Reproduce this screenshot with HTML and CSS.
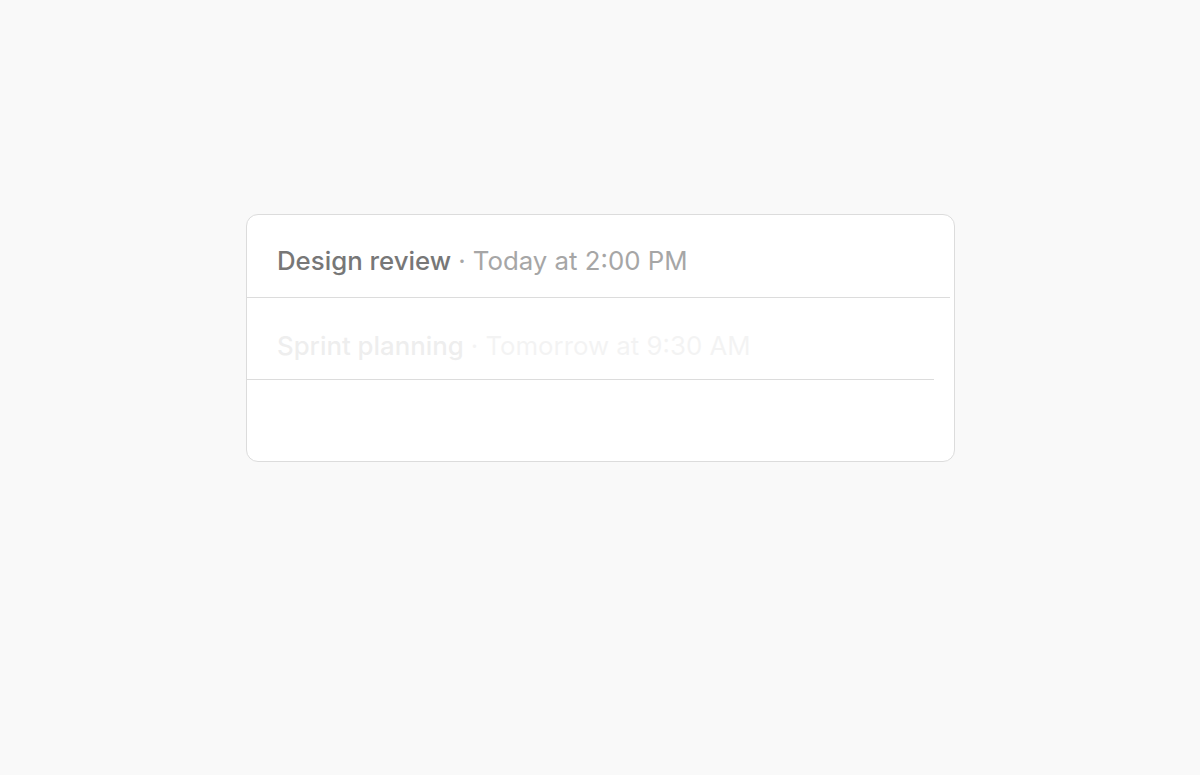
FILE: index.html
```html
<!DOCTYPE html>
<html lang="en">
<head>
    <meta charset="UTF-8">
    <meta name="viewport" content="width=device-width, initial-scale=1.0">
    <title>Upcoming</title>
    <link rel="stylesheet" href="styles.css">
</head>
<body>
    <div class="page">
        <!-- Event list -->
        <ul class="event-list">
            <li class="event-row">
                <span class="event-title">Design review</span>
                <span class="event-meta">· Today at 2:00 PM</span>
            </li>
            <li class="event-row event-row--leaving">
                <span class="event-title">Sprint planning</span>
                <span class="event-meta">· Tomorrow at 9:30 AM</span>
            </li>
            <li class="event-row event-row--empty"></li>
        </ul>
    </div>
</body>
</html>
```

FILE: styles.css
```css
/* Global Styles */
body {
    font-family: 'Inter', 'Liberation Sans', sans-serif;
    background-color: #f9f9f9;
    margin: 0;
}

.page {
    padding-top: 214px;
    padding-left: 246px;
}

/* Event list card */
.event-list {
    list-style: none;
    margin: 0;
    padding: 0;
    width: 707px;
    background-color: #fff;
    border: 1px solid #dcdcdc;
    border-radius: 12px;
    overflow: hidden;
}

.event-row {
    display: flex;
    align-items: center;
    gap: 7px;
    height: 83px;
    box-sizing: border-box;
    padding-left: 30px;
    padding-top: 8px;
    margin-right: 4px;
    border-bottom: 1px solid #dcdcdc;
    font-size: 25.8px;
    white-space: nowrap;
}

.event-row--leaving {
    height: 82px;
    padding-top: 13px;
    margin-right: 20px;
}

.event-row--leaving .event-title,
.event-row--leaving .event-meta {
    opacity: 0.12;
}

.event-row--empty {
    height: 81px;
    border-bottom: none;
}

.event-title {
    font-weight: 500;
    color: #777;
}

.event-meta {
    color: #a6a6a6;
}
```
